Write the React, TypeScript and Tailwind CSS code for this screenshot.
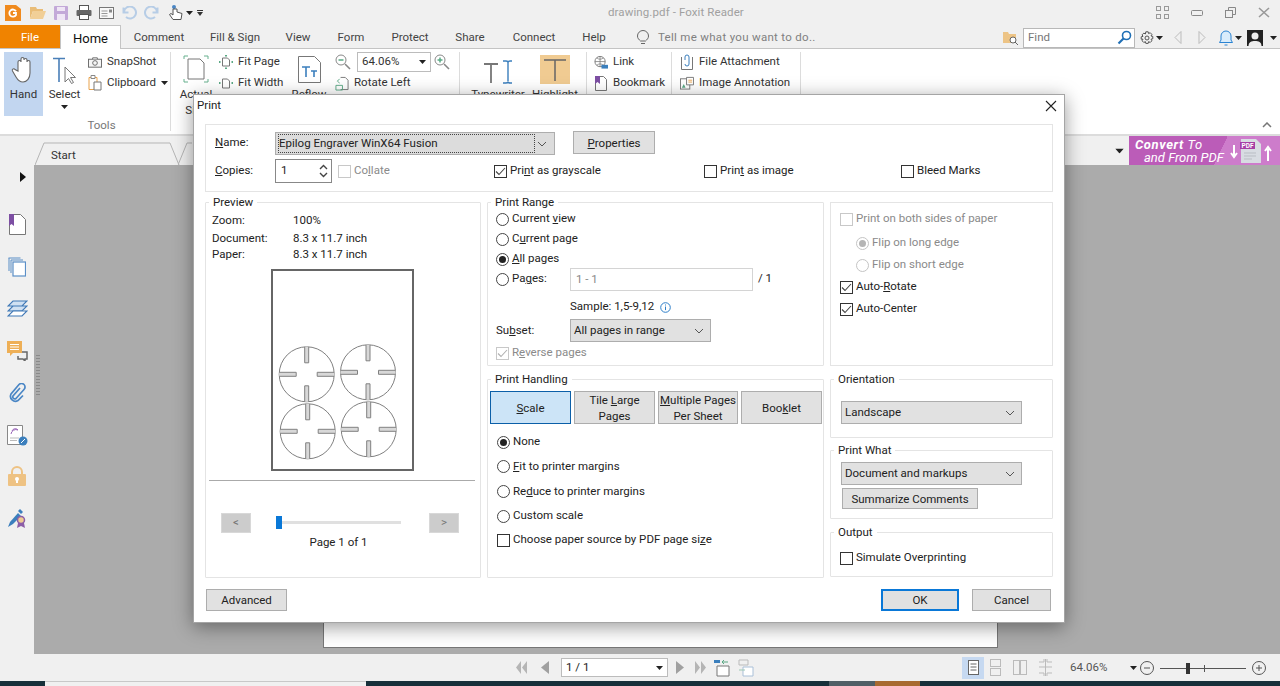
import { ReactNode } from "react";

const Caret = ({ className = "" }: { className?: string }) => (
  <svg width="7" height="4" viewBox="0 0 7 4" className={className}>
    <path d="M0 0h7L3.5 4z" fill="#222" />
  </svg>
);

const Chevron = () => (
  <svg width="10" height="6" viewBox="0 0 10 6" fill="none" stroke="#555" strokeWidth="1">
    <path d="M1 1l4 4 4-4" />
  </svg>
);

function Radio({ checked, disabled }: { checked?: boolean; disabled?: boolean }) {
  return (
    <span
      className={`flex h-[13px] w-[13px] shrink-0 items-center justify-center rounded-full border bg-white ${disabled ? "border-[#c4c4c4]" : "border-[#444]"}`}
    >
      {checked && <span className={`h-[7px] w-[7px] rounded-full ${disabled ? "bg-[#b5b5b5]" : "bg-[#222]"}`} />}
    </span>
  );
}

function Check({ checked, disabled }: { checked?: boolean; disabled?: boolean }) {
  return (
    <span
      className={`flex h-[13px] w-[13px] shrink-0 items-center justify-center border bg-white ${disabled ? "border-[#c8c8c8]" : "border-[#333]"}`}
    >
      {checked && (
        <svg width="11" height="9" viewBox="0 0 11 9" fill="none" stroke={disabled ? "#b0b0b0" : "#444"} strokeWidth="1.1">
          <path d="M1 4.5l3 3 6-6.5" />
        </svg>
      )}
    </span>
  );
}

function Opt({
  kind,
  checked,
  disabled,
  className = "",
  children,
}: {
  kind: "radio" | "check";
  checked?: boolean;
  disabled?: boolean;
  className?: string;
  children: ReactNode;
}) {
  return (
    <div className={`flex items-center gap-[3px] ${disabled ? "text-[#8a8a8a]" : ""} ${className}`}>
      {kind === "radio" ? <Radio checked={checked} disabled={disabled} /> : <Check checked={checked} disabled={disabled} />}
      <span>{children}</span>
    </div>
  );
}

function Group({ title, className = "", children }: { title: string; className?: string; children: ReactNode }) {
  return (
    <fieldset className={`rounded-[1px] border border-[#e4e4e4] ${className}`}>
      <legend className="ml-[3px] px-[4px] leading-[16px]">{title}</legend>
      {children}
    </fieldset>
  );
}

function Btn({ tone = "plain", className = "", children }: { tone?: "plain" | "active" | "default"; className?: string; children: ReactNode }) {
  const toneClass =
    tone === "active"
      ? "border border-[#0b5fa8] bg-[#cce4f7]"
      : tone === "default"
        ? "border-2 border-[#0a78d7] bg-[#e1e1e1]"
        : "border border-[#adadad] bg-[#e1e1e1]";
  return (
    <div className={`flex items-center justify-center whitespace-nowrap text-center leading-[16px] ${toneClass} ${className}`}>
      {children}
    </div>
  );
}

function Select({ label, className = "" }: { label: string; className?: string }) {
  return (
    <div className={`flex items-center justify-between border border-[#adadad] bg-[#e1e1e1] pl-[3px] pr-[6px] ${className}`}>
      <span>{label}</span>
      <Chevron />
    </div>
  );
}

function Cross({ x, y }: { x: number; y: number }) {
  const r = 27.5;
  return (
    <g transform={`translate(${x} ${y})`} stroke="#808080" strokeWidth="1">
      <circle r={r} fill="#fff" />
      <path d={`M-2 ${-r}V${-r + 16}H2V${-r}`} fill="#d8d8d8" />
      <path d={`M-2 ${r}V${r - 16}H2V${r}`} fill="#d8d8d8" />
      <path d={`M${-r} -2H${-r + 17}V2H${-r}`} fill="#d8d8d8" />
      <path d={`M${r} -2H${r - 17}V2H${r}`} fill="#d8d8d8" />
    </g>
  );
}

function PreviewPage() {
  return (
    <svg width="143" height="202" viewBox="271 269 143 202" className="block">
      <rect x="272" y="270" width="141" height="200" fill="#fff" stroke="#666" strokeWidth="2" />
      <Cross x={306.7} y={374.3} />
      <Cross x={368} y={372.3} />
      <Cross x={307.7} y={431.3} />
      <Cross x={368.7} y={429.3} />
    </svg>
  );
}

function PrintDialog() {
  return (
    <div className="absolute left-[193px] top-[94px] flex h-[529px] w-[872px] flex-col border border-[#a5a5a5] bg-white pl-[11px] pr-[11px] shadow-[0_4px_18px_rgba(0,0,0,0.4)]">
      <div className="flex h-[29px] shrink-0 items-center justify-between">
        <span className="-ml-[8px] -mt-[8px]">Print</span>
        <svg width="12" height="12" viewBox="0 0 12 12" stroke="#222" strokeWidth="1.1" className="-mr-[4px] -mt-[8px]">
          <path d="M1 1l10 10M11 1L1 11" />
        </svg>
      </div>

      <div className="h-[68px] shrink-0 border border-[#e4e4e4] pl-[9px] pt-[7px]">
        <div className="flex items-center">
          <span className="-mt-[2px] w-[60px]">
            <u>N</u>ame:
          </span>
          <div className="flex h-[23px] w-[280px] items-center justify-between border border-[#adadad] bg-[#dcdcdc] pl-[2px] pr-[7px]">
            <span className="flex h-[19px] w-[257px] items-center border border-dotted border-[#444]">
              Epilog Engraver WinX64 Fusion
            </span>
            <Chevron />
          </div>
          <Btn className="-mt-[2px] ml-[18px] h-[23px] w-[82px]">
            <span>
              <u>P</u>roperties
            </span>
          </Btn>
        </div>
        <div className="mt-[4px] flex items-center">
          <span className="w-[60px]">
            <u>C</u>opies:
          </span>
          <div className="flex h-[24px] w-[57px] items-center justify-between border border-[#888] pl-[5px] pr-[2px]">
            <span>1</span>
            <svg width="11" height="18" viewBox="0 0 11 18" fill="none" stroke="#444" strokeWidth="1.4">
              <path d="M2 7l3.5-3.5L9 7M2 11l3.5 3.5L9 11" />
            </svg>
          </div>
          <Opt kind="check" disabled className="ml-[6px] w-[156px]">
            Co<u>l</u>late
          </Opt>
          <Opt kind="check" checked className="w-[210px]">
            Pri<u>n</u>t as grayscale
          </Opt>
          <Opt kind="check" className="w-[197px]">
            Prin<u>t</u> as image
          </Opt>
          <Opt kind="check">Bleed Marks</Opt>
        </div>
      </div>

      <div className="mt-[2px] grid grid-cols-[276px_337px_223px] gap-[6px]">
        <Group title="Preview" className="h-[384px]">
          <div className="mt-[2px] pl-[6px]">
            <div className="flex h-[18px] items-center">
              <span className="w-[81px]">Zoom:</span>
              <span>100%</span>
            </div>
            <div className="flex h-[17px] items-center">
              <span className="w-[81px]">Document:</span>
              <span>8.3 x 11.7 inch</span>
            </div>
            <div className="flex h-[16px] items-center">
              <span className="w-[81px]">Paper:</span>
              <span>8.3 x 11.7 inch</span>
            </div>
          </div>
          <div className="ml-[65px] mt-[6px]">
            <PreviewPage />
          </div>
          <div className="ml-[3px] mr-[5px] mt-[9px] h-px bg-[#aaa]" />
          <div className="mt-[32px] flex items-start pl-[15px]">
            <div className="flex h-[20px] w-[30px] items-center justify-center border border-[#d8d8d8] bg-[#ccc] text-[#777]">&lt;</div>
            <div className="ml-[25px] w-[125px]">
              <div className="relative mt-[3px] h-[13px]">
                <div className="absolute left-0 right-0 top-[5px] h-[3px] bg-[#e0e0e0]" />
                <div className="absolute left-0 top-0 h-[13px] w-[6px] bg-[#0a78d7]" />
              </div>
              <div className="mt-[5px] text-center leading-[16px]">Page 1 of 1</div>
            </div>
            <div className="ml-[28px] flex h-[20px] w-[30px] items-center justify-center border border-[#d8d8d8] bg-[#ccc] text-[#777]">&gt;</div>
          </div>
        </Group>

        <div className="flex flex-col gap-[5px]">
          <Group title="Print Range" className="h-[172px]">
            <div className="-mt-[1px] pl-[8px]">
              <Opt kind="radio" className="h-[20px]">
                Current <u>v</u>iew
              </Opt>
              <Opt kind="radio" className="h-[20px]">
                C<u>u</u>rrent page
              </Opt>
              <Opt kind="radio" checked className="h-[20px]">
                <u>A</u>ll pages
              </Opt>
              <div className="flex h-[20px] items-center">
                <Opt kind="radio" className="w-[74px]">
                  Pa<u>g</u>es:
                </Opt>
                <div className="mt-[1px] flex h-[23px] w-[183px] items-center border border-[#d4d4d4] pl-[5px] text-[#888]">1 - 1</div>
                <span className="ml-[5px]">/ 1</span>
              </div>
              <div className="ml-[74px] mt-[10px] flex h-[16px] items-center gap-[6px]">
                Sample: 1,5-9,12
                <svg width="11" height="11" viewBox="0 0 11 11" fill="none" stroke="#2f7fc8">
                  <circle cx="5.5" cy="5.5" r="4.8" />
                  <path d="M5.5 4.5v3.6M5.5 2.5v1" />
                </svg>
              </div>
              <div className="mt-[4px] flex items-center">
                <span className="w-[74px]">
                  Su<u>b</u>set:
                </span>
                <Select label="All pages in range" className="h-[23px] w-[141px]" />
              </div>
              <Opt kind="check" checked disabled className="mt-[2px] h-[18px]">
                R<u>e</u>verse pages
              </Opt>
            </div>
          </Group>

          <Group title="Print Handling" className="h-[207px]">
            <div className="mt-[4px] grid grid-cols-[81px_81px_80px_81px] gap-[3px] pl-[2px]">
              <Btn tone="active" className="h-[33px]">
                <span>
                  <u>S</u>cale
                </span>
              </Btn>
              <Btn className="h-[33px]">
                <span>
                  Tile <u>L</u>arge
                  <br />
                  Pages
                </span>
              </Btn>
              <Btn className="h-[33px]">
                <span>
                  <u>M</u>ultiple Pages
                  <br />
                  Per Sheet
                </span>
              </Btn>
              <Btn className="h-[33px]">
                <span>
                  Boo<u>k</u>let
                </span>
              </Btn>
            </div>
            <div className="mt-[6px] pl-[9px]">
              <Opt kind="radio" checked className="h-[24px]">
                None
              </Opt>
              <Opt kind="radio" className="h-[25px]">
                <u>F</u>it to printer margins
              </Opt>
              <Opt kind="radio" className="h-[25px]">
                Re<u>d</u>uce to printer margins
              </Opt>
              <Opt kind="radio" className="h-[24px]">
                Custom scale
              </Opt>
              <Opt kind="check" className="h-[24px]">
                Choose paper source by PDF page si<u>z</u>e
              </Opt>
            </div>
          </Group>
        </div>

        <div className="flex flex-col">
          <div className="mt-[8px] h-[164px] border border-[#e4e4e4] pl-[9px] pt-[6px]">
            <Opt kind="check" disabled className="h-[20px]">
              Print on both sides of paper
            </Opt>
            <Opt kind="radio" checked disabled className="ml-[16px] mt-[3px] h-[22px]">
              Flip on long edge
            </Opt>
            <Opt kind="radio" disabled className="ml-[16px] h-[22px]">
              Flip on short edge
            </Opt>
            <Opt kind="check" checked className="h-[22px]">
              Auto-<u>R</u>otate
            </Opt>
            <Opt kind="check" checked className="h-[22px]">
              Auto-Center
            </Opt>
          </div>
          <Group title="Orientation" className="mt-[5px] h-[67px]">
            <Select label="Landscape" className="ml-[10px] mt-[14px] h-[23px] w-[181px]" />
          </Group>
          <Group title="Print What" className="mt-[4px] h-[77px]">
            <Select label="Document and markups" className="ml-[10px] mt-[4px] h-[23px] w-[181px]" />
            <Btn className="ml-[11px] mt-[3px] h-[21px] w-[136px]">Summarize Comments</Btn>
          </Group>
          <Group title="Output" className="mt-[5px] h-[53px]">
            <Opt kind="check" className="ml-[9px] mt-[6px] h-[24px]">
              Simulate Overprinting
            </Opt>
          </Group>
        </div>
      </div>

      <div className="mt-[11px] flex items-center">
        <Btn className="ml-[1px] h-[22px] w-[81px]">Advanced</Btn>
        <Btn tone="default" className="ml-auto h-[22px] w-[78px]">
          OK
        </Btn>
        <Btn className="ml-[13px] mr-[2px] h-[22px] w-[79px]">Cancel</Btn>
      </div>
    </div>
  );
}

function TitleBar() {
  return (
    <div className="flex h-[25px] shrink-0 items-center bg-[#f0f0f0]">
      <div className="flex items-center">
        <svg width="16" height="16" viewBox="0 0 16 16" className="ml-[5px]">
          <path d="M0 0h11l5 4v12H0z" fill="#f08a1d" />
          <path d="M11 6.2A3.6 3.6 0 1 0 11 10V8H8" fill="none" stroke="#fff" strokeWidth="1.8" />
        </svg>
        <svg width="16" height="14" viewBox="0 0 16 14" className="ml-[9px]">
          <path d="M0 1h6l1 2h6v2H3L0 13z" fill="#e9bd78" />
          <path d="M3 5h13l-3 8H0z" fill="#f1cf97" />
        </svg>
        <svg width="14" height="14" viewBox="0 0 14 14" className="ml-[8px]">
          <rect width="14" height="14" rx="1" fill="#c3a9d8" />
          <rect x="3" y="1" width="8" height="4" fill="#efe6f5" />
          <rect x="3" y="8" width="8" height="6" fill="#efe6f5" />
        </svg>
        <svg width="16" height="15" viewBox="0 0 16 15" className="ml-[8px]">
          <rect x="3.5" y=".5" width="9" height="5" fill="#fff" stroke="#555" />
          <rect x=".5" y="5" width="15" height="6" rx="1" fill="#666" />
          <rect x="3.5" y="9.5" width="9" height="5" fill="#fff" stroke="#555" />
        </svg>
        <svg width="15" height="12" viewBox="0 0 15 12" className="ml-[7px]" fill="none" stroke="#777">
          <rect x=".5" y=".5" width="14" height="11" fill="#f8f8f8" />
          <path d="M2.5 4h6M2.5 6.500h6M2.5 9h6" stroke="#999" />
          <rect x="10" y="2.500" width="3" height="3" fill="#888" stroke="none" />
        </svg>
        <svg width="15" height="14" viewBox="0 0 15 14" className="ml-[8px]" fill="none" stroke="#b7cde6" strokeWidth="2">
          <path d="M2 6a6 6 0 1 1 2 5M1.500 1.500V6.500H6.500" />
        </svg>
        <svg width="15" height="14" viewBox="0 0 15 14" className="ml-[7px]" fill="none" stroke="#b7cde6" strokeWidth="2">
          <path d="M13 6a6 6 0 1 0-2 5M13.500 1.500V6.500H8.500" />
        </svg>
        <svg width="17" height="17" viewBox="0 0 17 17" className="ml-[9px]" fill="none" stroke="#555">
          <circle cx="6" cy="3" r="2" fill="#4a86c5" stroke="none" />
          <path d="M5 5v6L3 9.500 1.500 10.500 5 15.500h8l1-6-5-1.500V5z" fill="#fff" />
        </svg>
        <Caret className="ml-[1px]" />
        <svg width="6" height="6" viewBox="0 0 6 6" className="ml-[4px]">
          <path d="M0 0h6v1H0zM0 2h6L3 6z" fill="#333" />
        </svg>
      </div>
      <span className="absolute left-[608px] tracking-[0.1px] text-[#a0a0a0]">drawing.pdf - Foxit Reader</span>
      <div className="ml-auto flex items-center gap-[22px] pr-[10px]">
        <svg width="13" height="13" viewBox="0 0 13 13" fill="none" stroke="#999">
          <rect x=".5" y=".5" width="4" height="4" />
          <rect x="8.500" y=".5" width="4" height="4" />
          <rect x=".5" y="8.500" width="4" height="4" />
          <rect x="8.500" y="8.500" width="4" height="4" />
        </svg>
        <svg width="12" height="6" viewBox="0 0 12 6" fill="none" stroke="#888">
          <rect x=".5" y=".5" width="11" height="5" rx="1" />
        </svg>
        <svg width="11" height="11" viewBox="0 0 11 11" fill="none" stroke="#888">
          <rect x=".5" y="3.500" width="7" height="7" />
          <path d="M3.500 3.500v-3h7v7h-3" />
        </svg>
        <svg width="12" height="11" viewBox="0 0 12 11" fill="none" stroke="#999" strokeWidth="1.600">
          <path d="M1 1l10 9M11 1L1 10" />
        </svg>
      </div>
    </div>
  );
}

function MenuRow() {
  const tabs = [
    ["Comment", "w-[76px]"],
    ["Fill & Sign", "w-[76px]"],
    ["View", "w-[50px]"],
    ["Form", "w-[56px]"],
    ["Protect", "w-[62px]"],
    ["Share", "w-[58px]"],
    ["Connect", "w-[70px]"],
    ["Help", "w-[50px]"],
  ];
  return (
    <div className="flex h-[24px] shrink-0 items-center border-b border-[#c4c4c4] bg-[#f0f0f0] pt-[2px]">
      <div className="-mt-[2px] flex h-[23px] w-[60px] items-center justify-center bg-[#f08300] pt-[2px] text-white">File</div>
      <div className="z-10 -mt-[2px] flex h-[24px] w-[61px] items-center justify-center self-start border border-b-0 border-[#c4c4c4] bg-white pt-[2px] text-[13px] text-[#111]">
        Home
      </div>
      {tabs.map(([name, w]) => (
        <div key={name} className={`text-center text-[#444] ${w}`}>
          {name}
        </div>
      ))}
      <svg width="14" height="15" viewBox="0 0 14 15" fill="none" stroke="#666" className="ml-[17px]">
        <path d="M4.500 11C3 9.500 1.500 8.500 1.500 6a5.500 5.500 0 0 1 11 0c0 2.500-1.500 3.500-3 5zM5 13.500h4" />
      </svg>
      <span className="ml-[8px] tracking-[0.3px] text-[#808080]">Tell me what you want to do..</span>
      <div className="ml-auto flex items-center">
        <svg width="15" height="14" viewBox="0 0 15 14">
          <path d="M0 1h5l1 2h7v9H0z" fill="#edc486" />
          <circle cx="10" cy="9" r="3" fill="#fff" stroke="#666" />
          <path d="M12 11l3 3" stroke="#666" />
        </svg>
        <div className="ml-[5px] flex h-[20px] w-[112px] items-center justify-between border border-[#b8b8b8] bg-white pl-[4px] pr-[2px] text-[#777]">
          Find
          <svg width="15" height="15" viewBox="0 0 15 15" fill="none" stroke="#1f6fb5" strokeWidth="1.600">
            <circle cx="9.500" cy="5.500" r="4" />
            <path d="M6.500 8.500L1.500 13.500" strokeWidth="2.200" />
          </svg>
        </div>
        <svg width="14" height="14" viewBox="0 0 14 14" fill="none" stroke="#555" className="ml-[5px]">
          <circle cx="7" cy="7" r="2" />
          <path d="M5.800.8h2.400l.4 1.800 1.600-.9 1.700 1.700-.9 1.600 1.800.4v2.400l-1.800.4.9 1.600-1.700 1.700-1.600-.9-.4 1.800H5.800l-.4-1.800-1.600.9-1.700-1.700.9-1.600L1.200 8.200V5.800L3 5.400l-.9-1.600 1.700-1.700 1.600.9z" />
        </svg>
        <Caret className="ml-[2px]" />
        <svg width="8" height="13" viewBox="0 0 8 13" fill="none" stroke="#bbb" className="ml-[11px]">
          <path d="M7 .5v12L1 6.500z" />
        </svg>
        <svg width="8" height="13" viewBox="0 0 8 13" fill="none" stroke="#bbb" className="ml-[16px]">
          <path d="M1 .5v12L7 6.500z" />
        </svg>
        <svg width="14" height="16" viewBox="0 0 14 16" fill="#d9ecfb" stroke="#2a83d2" className="ml-[13px]">
          <path d="M.5 12.500h13L12 10V6a5 5 0 0 0-10 0v4zM5.500 15h3" />
        </svg>
        <Caret className="ml-[2px]" />
        <svg width="16" height="16" viewBox="0 0 16 16" className="ml-[5px]">
          <rect width="16" height="16" fill="#222" />
          <circle cx="8" cy="6" r="3.500" fill="#eee" />
          <path d="M1.500 16c0-4 3-5 6.500-5s6.500 1 6.500 5z" fill="#eee" />
        </svg>
        <Caret className="ml-[7px] mr-[3px]" />
      </div>
    </div>
  );
}

const Sep = () => <div className="mb-[3px] w-px shrink-0 bg-[#dcdcdc]" />;

function RibbonItem({ icon, children, className = "" }: { icon: ReactNode; children: ReactNode; className?: string }) {
  return (
    <div className={`flex h-[20px] items-center gap-[5px] whitespace-nowrap ${className}`}>
      <span className="flex w-[14px] justify-center">{icon}</span>
      {children}
    </div>
  );
}

function Ribbon() {
  return (
    <div className="relative flex h-[87px] shrink-0 border-b-2 border-[#dcdcdc] bg-white pt-[3px] text-[#333]">
      <div className="ml-[4px] flex w-[166px] shrink-0 flex-col">
        <div className="flex">
          <div className="flex h-[64px] w-[39px] shrink-0 flex-col items-center bg-[#c2d6f0] pt-[4px]">
            <svg width="26" height="28" viewBox="0 0 26 28" fill="#fff" stroke="#666" strokeWidth="1.100">
              <path d="M7 15V6a1.500 1.500 0 0 1 3 0V3a1.500 1.500 0 0 1 3 0v1a1.500 1.500 0 0 1 3 0v2a1.500 1.500 0 0 1 3 0v11c0 5-3 9-7 9-3.500 0-5-1.500-7-5l-3.500-6c-1-2 1.500-3 2.500-1.500z" />
            </svg>
            <span className="mt-[2px] leading-[16px]">Hand</span>
          </div>
          <div className="ml-[3px] flex w-[37px] shrink-0 flex-col items-center pt-[5px]">
            <svg width="25" height="27" viewBox="0 0 25 27" fill="none">
              <path d="M1 1.500h12M7 1.500V25" stroke="#4a7fb8" strokeWidth="1.600" />
              <path d="M13 10v15l3.500-3.500 3 5 2-1-3-5h5z" fill="#fff" stroke="#777" />
            </svg>
            <span className="mt-[2px] leading-[16px]">Select</span>
            <Caret className="mt-[3px]" />
          </div>
          <div className="ml-[5px]">
            <RibbonItem
              icon={
                <svg width="15" height="11" viewBox="0 0 15 11" fill="#f5f5f5" stroke="#666">
                  <rect x=".5" y="2" width="14" height="8.500" />
                  <circle cx="7.500" cy="6" r="2.500" />
                  <path d="M5 2V.5h5V2" />
                </svg>
              }
            >
              SnapShot
            </RibbonItem>
            <RibbonItem
              className="mt-[1px]"
              icon={
                <svg width="14" height="16" viewBox="0 0 14 16" fill="none">
                  <path d="M1 2.500h8v12H1z" stroke="#e9a34c" />
                  <path d="M3 .5h4v3H3z" fill="#fff" stroke="#888" />
                  <path d="M6 7h7v8H6z" fill="#fff" stroke="#777" />
                </svg>
              }
            >
              Clipboard
              <Caret />
            </RibbonItem>
          </div>
        </div>
        <div className="mt-[1px] pl-[29px] text-center text-[#777]">Tools</div>
      </div>
      <Sep />
      <div className="ml-[9px] flex w-[279px] shrink-0">
        <div className="flex w-[32px] shrink-0 flex-col items-center pt-[3px]">
          <svg width="26" height="28" viewBox="0 0 26 28" fill="none">
            <path d="M5 4h12l4 4v16H5z" fill="#fff" stroke="#777" />
            <path d="M1 4V1h4M21 1h4v3M1 24v3h4M25 24v3h-4" stroke="#66b08e" />
          </svg>
          <span className="mt-[3px] text-center leading-[16px]">
            Actual
            <br />
            Size
          </span>
        </div>
        <div className="ml-[7px] w-[73px] shrink-0">
          <RibbonItem
            icon={
              <svg width="14" height="14" viewBox="0 0 14 14" fill="none" stroke="#777">
                <path d="M3.500 3h5l2 2v6h-7z" />
                <path d="M7 0v1.500M7 12.500V14M0 7h1.500M12.500 7H14" stroke="#5aa884" strokeWidth="2" />
              </svg>
            }
          >
            Fit Page
          </RibbonItem>
          <RibbonItem
            className="mt-[1px]"
            icon={
              <svg width="14" height="14" viewBox="0 0 14 14" fill="none" stroke="#777">
                <path d="M3.500 3h5l2 2v7h-7z" />
                <path d="M0 7h1.500M12.500 7H14" stroke="#5aa884" strokeWidth="2" />
              </svg>
            }
          >
            Fit Width
          </RibbonItem>
        </div>
        <div className="flex w-[34px] shrink-0 flex-col items-center pt-[4px]">
          <svg width="23" height="27" viewBox="0 0 23 27" fill="none">
            <path d="M.5.5h16l6 6v20H.5z" fill="#fff" stroke="#777" />
            <path d="M4 11h8M8 11v10M13 15h6M16 15v6" stroke="#3b7fbd" strokeWidth="1.600" />
          </svg>
          <span className="mt-[3px] leading-[16px]">Reflow</span>
        </div>
        <div className="ml-[9px]">
          <div className="flex h-[20px] items-center">
            <svg width="16" height="16" viewBox="0 0 16 16" fill="none" stroke="#888">
              <circle cx="6" cy="6" r="5" />
              <path d="M10 10l5 5" strokeWidth="1.600" />
              <path d="M3.500 6h5" stroke="#59a985" strokeWidth="1.500" />
            </svg>
            <div className="ml-[6px] flex h-[20px] w-[74px] items-center justify-between border border-[#bcbcbc] bg-white pl-[4px] pr-[4px]">
              64.06%
              <Caret />
            </div>
            <svg width="16" height="16" viewBox="0 0 16 16" fill="none" stroke="#888" className="ml-[3px]">
              <circle cx="6" cy="6" r="5" />
              <path d="M10 10l5 5" strokeWidth="1.600" />
              <path d="M3.500 6h5M6 3.500v5" stroke="#59a985" strokeWidth="1.500" />
            </svg>
          </div>
          <RibbonItem
            className="mt-[1px]"
            icon={
              <svg width="15" height="15" viewBox="0 0 15 15" fill="none" stroke="#777">
                <path d="M6 1h5l3 3v10H6" />
                <path d="M1 9.500h7v5H1zM5 2.500L2.500 5 5 7" stroke="#5aa884" />
              </svg>
            }
          >
            Rotate Left
          </RibbonItem>
        </div>
      </div>
      <Sep />
      <div className="flex w-[126px] shrink-0 pl-[10px]">
        <div className="flex w-[56px] shrink-0 flex-col items-center pt-[8px]">
          <svg width="28" height="24" viewBox="0 0 28 24" fill="none">
            <path d="M0 4h14M7 4v19" stroke="#777" strokeWidth="1.800" />
            <path d="M19 1h3c1 0 2 .5 2 1.500 0-1 1-1.500 2-1.500h2M24 2.500V21M19 23h3c1 0 2-.5 2-1.500 0 1 1 1.500 2 1.500h2" stroke="#3b7fbd" strokeWidth="1.400" />
          </svg>
          <span className="mt-[2px] leading-[16px]">Typewriter</span>
        </div>
        <div className="ml-[7px] flex w-[44px] shrink-0 flex-col items-center pt-[3px]">
          <div className="flex h-[29px] w-[30px] items-center justify-center bg-[#f0cb92]">
            <svg width="22" height="24" viewBox="0 0 22 24" fill="none" stroke="#666" strokeWidth="1.500">
              <path d="M0 2h22M11 2v21" />
            </svg>
          </div>
          <span className="mt-[2px] leading-[16px]">Highlight</span>
        </div>
      </div>
      <Sep />
      <div className="w-[84px] shrink-0 pl-[7px]">
        <RibbonItem
          icon={
            <svg width="15" height="15" viewBox="0 0 15 15" fill="none" stroke="#777">
              <circle cx="6.500" cy="6.500" r="5.500" />
              <path d="M1 6.500h11M6.500 1v11M3 2.500c2 2 5 2 7 0M3 10.500c2-2 5-2 7 0" strokeWidth=".8" />
              <rect x="8" y="10" width="7" height="4" fill="#3b7fbd" stroke="none" />
            </svg>
          }
        >
          Link
        </RibbonItem>
        <RibbonItem
          className="mt-[1px]"
          icon={
            <svg width="12" height="15" viewBox="0 0 12 15" fill="none" stroke="#777">
              <path d="M.5.5h8l3 3v11H.5z" fill="#fff" />
              <path d="M0 0h5v8L2.500 6 0 8z" fill="#7d4fa3" stroke="none" />
            </svg>
          }
        >
          Bookmark
        </RibbonItem>
      </div>
      <Sep />
      <div className="w-[128px] shrink-0 pl-[8px]">
        <RibbonItem
          icon={
            <svg width="12" height="16" viewBox="0 0 12 16" fill="none" stroke="#777">
              <path d="M.5 3v12.500h11V3" />
              <path d="M4 6V3a2 2 0 0 1 4 0v7a2 2 0 0 1-4 0" stroke="#3b7fbd" />
            </svg>
          }
        >
          File Attachment
        </RibbonItem>
        <RibbonItem
          className="mt-[1px]"
          icon={
            <svg width="15" height="14" viewBox="0 0 15 14" fill="none" stroke="#777">
              <rect x=".5" y="2.500" width="10" height="11" />
              <path d="M2 12l2-4 2 4z" fill="#5aa884" stroke="none" />
              <path d="M7 1h7.500v8H7z" fill="#fff" />
              <path d="M9 4h4M9 6h4" stroke="#e9a34c" />
            </svg>
          }
        >
          Image Annotation
        </RibbonItem>
      </div>
      <Sep />
      <svg width="10" height="6" viewBox="0 0 10 6" fill="none" stroke="#777" strokeWidth="1.500" className="absolute right-[8px] top-[73px]">
        <path d="M1 5l4-4 4 4" />
      </svg>
    </div>
  );
}

function TabBar() {
  return (
    <div className="flex h-[29px] shrink-0 bg-[#f0f0f0] text-[#333]">
      <svg width="145" height="23" viewBox="0 0 145 23" fill="#f0f0f0" stroke="#b5b5b5" className="ml-[35px] mt-[6px]">
        <path d="M0 23L9 1h126l9 22" />
      </svg>
      <span className="absolute left-[51px] top-[147px]">Start</span>
      <svg width="14" height="23" viewBox="0 0 14 23" fill="none" stroke="#b5b5b5" className="-ml-[2px] mt-[6px]">
        <path d="M0 23L9 1h5" />
      </svg>
      <div className="ml-auto flex items-center">
        <Caret className="mr-[6px] scale-125" />
        <div className="flex h-[29px] w-[151px] items-center bg-[linear-gradient(115deg,#bb5cb8_60%,#cd7ccb_60%)] pl-[6px] text-white">
          <div className="w-[92px] text-[13px] italic leading-[13px]">
            <div className="tracking-[0.6px]">
              <b>Convert</b> To
            </div>
            <div className="whitespace-nowrap pl-[9px]">and From PDF</div>
          </div>
          <svg width="44" height="27" viewBox="0 0 44 27" className="ml-[1px]">
            <path d="M6 8v11M3 16l3 4 3-4M40 24V12M37 14l3-4 3 4" stroke="#fff" strokeWidth="2" fill="none" />
            <path d="M13 2h15l5 5v19H13z" fill="#d8dce2" />
            <rect x="12" y="5" width="15" height="7" fill="#a63ea6" />
            <text x="13.500" y="11" fontSize="6.500" fill="#fff" fontWeight="700" fontStyle="normal">
              PDF
            </text>
            <path d="M16 16h12M16 19h12M16 22h8" stroke="#b9bdc4" />
          </svg>
        </div>
      </div>
    </div>
  );
}

function Sidebar() {
  return (
    <div className="relative flex w-[34px] shrink-0 flex-col items-center bg-[#f0f0f0]">
      <svg width="6" height="10" viewBox="0 0 6 10" className="ml-[12px] mt-[7px]">
        <path d="M0 0l6 5-6 5z" fill="#111" />
      </svg>
      <svg width="17" height="21" viewBox="0 0 17 21" className="mt-[32px]" fill="#fff" stroke="#777">
        <path d="M.5.5h11l5 5v15H.5z" />
        <path d="M0 0h5v12l-2.500-2L0 12z" fill="#7d4fa3" stroke="none" />
      </svg>
      <svg width="18" height="20" viewBox="0 0 18 20" className="mt-[22px]" fill="#fff" stroke="#5b8fc7">
        <path d="M.5 1h12M1 1v13M3 3h12M3 3v13" />
        <rect x="5" y="5" width="12.500" height="14" strokeWidth="1.200" />
      </svg>
      <svg width="21" height="18" viewBox="0 0 21 18" className="mt-[23px]" fill="#fff" stroke="#3f78b6" strokeWidth="1.200">
        <path d="M6 1h14l-5 5H1zM6 6h14l-5 5H1z" fill="#cfe0f2" />
        <path d="M6 11h14l-5 5H1z" />
      </svg>
      <svg width="21" height="20" viewBox="0 0 21 20" className="mt-[23px]">
        <path d="M13 11h7v7h-2v2l-2-2h-5v-3" fill="none" stroke="#666" strokeWidth="1.500" />
        <path d="M0 0h15v12H6l-3 3v-3H0z" fill="#eeaf56" />
        <path d="M3 3.500h9M3 6h9M3 8.500h9" stroke="#fff" />
      </svg>
      <svg width="18" height="20" viewBox="0 0 18 20" className="mt-[22px]" fill="none" stroke="#4a86c5" strokeWidth="1.700">
        <path d="M12 5l-7 8a2 2 0 0 0 3 2.500l8-9a3.500 3.500 0 0 0-5-5l-8 9.500a5 5 0 0 0 7 6.500l5-5" />
      </svg>
      <svg width="21" height="21" viewBox="0 0 21 21" className="mt-[22px]">
        <path d="M.5.5h15v19H.5z" fill="#fff" stroke="#888" />
        <path d="M5 6a3.500 3.500 0 0 1 6-1M4 9a5 5 0 0 1 7-4" fill="none" stroke="#9a66b8" />
        <path d="M3 13h9M3 15.500h7" stroke="#bbb" />
        <circle cx="16" cy="16" r="4.500" fill="#3b7fbd" />
        <path d="M14 18l4-4" stroke="#fff" />
      </svg>
      <svg width="18" height="20" viewBox="0 0 18 20" className="mt-[20px]">
        <path d="M4 9V6a5 5 0 0 1 10 0v3" fill="none" stroke="#eec283" strokeWidth="2" />
        <rect y="8" width="18" height="12" rx="1" fill="#eec283" />
        <circle cx="9" cy="13" r="2" fill="#fff" />
        <rect x="8" y="13" width="2" height="4" fill="#fff" />
      </svg>
      <svg width="20" height="20" viewBox="0 0 20 20" className="mt-[22px]">
        <path d="M1 19l2-5 8-9 3 3-8 8z" fill="#3b7fbd" />
        <path d="M11 3l2-2 3 3-2 2z" fill="#3b7fbd" />
        <circle cx="14" cy="12" r="3.500" fill="#f0cb92" stroke="#8c5ea8" strokeWidth="1.500" />
        <path d="M11 15l-1 5 4-2 4 2-1-5" fill="#8c5ea8" />
      </svg>
      <div className="absolute left-[36px] top-[190px] h-[40px] w-[4px] bg-[repeating-linear-gradient(to_bottom,#8a8a8a_0,#8a8a8a_1px,transparent_1px,transparent_3px)]" />
    </div>
  );
}

function StatusBar() {
  return (
    <div className="flex h-[27px] shrink-0 items-center bg-[#f0f0f0] pl-[516px] text-[#444]">
      <svg width="12" height="13" viewBox="0 0 12 13" fill="#b5b5b5">
        <path d="M0 6.500L5 0v13zM6 6.500L11 0v13z" />
      </svg>
      <svg width="8" height="13" viewBox="0 0 8 13" fill="#a0a0a0" className="ml-[13px]">
        <path d="M0 6.500L8 0v13z" />
      </svg>
      <div className="ml-[12px] flex h-[19px] w-[107px] items-center justify-between border border-[#bcbcbc] bg-white pl-[4px] pr-[4px] text-[#222]">
        1 / 1
        <Caret />
      </div>
      <svg width="8" height="13" viewBox="0 0 8 13" fill="#a0a0a0" className="ml-[8px]">
        <path d="M8 6.500L0 0v13z" />
      </svg>
      <svg width="12" height="13" viewBox="0 0 12 13" fill="#b5b5b5" className="ml-[11px]">
        <path d="M5 6.500L0 0v13zM11 6.500L6 0v13z" />
      </svg>
      <svg width="17" height="18" viewBox="0 0 17 18" fill="none" className="ml-[6px]">
        <path d="M1 1h6v3H1z" fill="#3b7fbd" />
        <path d="M4 7h12v10H4z" fill="#fff" stroke="#777" />
        <path d="M9 3h6M9 3l2-2M9 3l2 2" stroke="#5aa884" />
      </svg>
      <svg width="16" height="18" viewBox="0 0 16 18" fill="none" className="ml-[8px]">
        <path d="M1 1h9v5H1z" stroke="#bbb" />
        <path d="M5 8h10v9H5z" fill="#fff" stroke="#aac0d8" />
        <path d="M1 11h6" stroke="#9cc8b4" />
      </svg>
      <div className="ml-[208px] flex h-[22px] w-[22px] items-center justify-center bg-[#c6d9f1]">
        <svg width="11" height="15" viewBox="0 0 11 15" fill="#fff" stroke="#666">
          <rect x=".5" y=".5" width="10" height="14" />
          <path d="M2.500 4h6M2.500 7h6M2.500 10h6" />
        </svg>
      </div>
      <svg width="11" height="17" viewBox="0 0 11 17" fill="none" stroke="#bbb" className="ml-[6px]">
        <rect x=".5" y=".5" width="10" height="7" />
        <rect x=".5" y="9.500" width="10" height="7" />
      </svg>
      <svg width="14" height="15" viewBox="0 0 14 15" fill="none" stroke="#bbb" className="ml-[12px]">
        <rect x=".5" y=".5" width="6" height="14" />
        <rect x="7.500" y=".5" width="6" height="14" />
      </svg>
      <svg width="15" height="17" viewBox="0 0 15 17" fill="none" stroke="#bbb" className="ml-[11px]">
        <path d="M1 3h5V0M14 3H9V0M1 8h13M1 14h5v3M14 14H9v3M7.500 0v17" />
      </svg>
      <span className="ml-[17px] w-[60px] text-[#555]">64.06%</span>
      <Caret />
      <svg width="14" height="14" viewBox="0 0 14 14" fill="none" stroke="#555" className="ml-[3px]">
        <circle cx="7" cy="7" r="6.500" />
        <path d="M4 7h6" />
      </svg>
      <div className="relative ml-[6px] h-[12px] w-[86px]">
        <div className="absolute left-0 right-0 top-[6px] h-px bg-[#555]" />
        <div className="absolute left-[44px] top-[3px] h-[7px] w-px bg-[#555]" />
        <div className="absolute left-[26px] top-[1px] h-[11px] w-[4px] bg-[#333]" />
      </div>
      <svg width="14" height="14" viewBox="0 0 14 14" fill="none" stroke="#555" className="ml-[6px]">
        <circle cx="7" cy="7" r="6.500" />
        <path d="M4 7h6M7 4v6" />
      </svg>
    </div>
  );
}

export default function App() {
  return (
    <div className="relative flex h-[686px] w-[1280px] flex-col overflow-hidden bg-[#f0f0f0] font-['Roboto',sans-serif] text-[11.5px] text-[#222]">
      <TitleBar />
      <MenuRow />
      <Ribbon />
      <TabBar />
      <div className="flex min-h-0 flex-1">
        <Sidebar />
        <div className="flex flex-1 justify-start bg-[#ababab] pl-[289px]">
          <div className="mb-[6px] w-[675px] border border-[#777] bg-white" />
        </div>
      </div>
      <StatusBar />
      <div className="flex h-[5px] shrink-0 bg-[#17303a]">
        <div className="ml-[45px] w-[321px] border-t border-[#c8c8c8] bg-[#f0f0f0]" />
        <div className="ml-[463px] w-[46px] bg-[#505f66]" />
        <div className="w-[45px] bg-[#a86a30]" />
      </div>
      <PrintDialog />
    </div>
  );
}
